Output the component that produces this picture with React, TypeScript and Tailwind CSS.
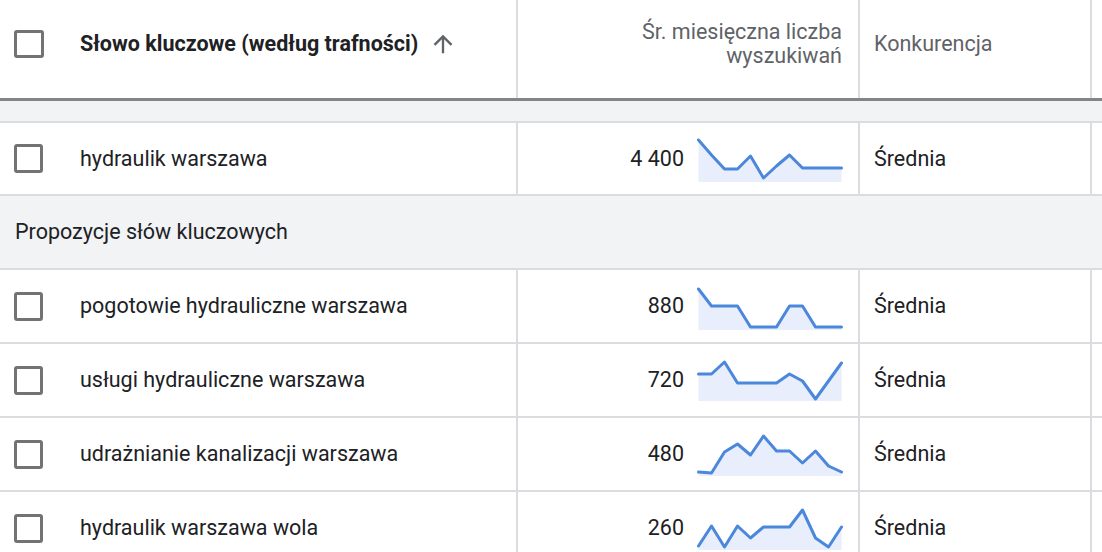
const KEYWORD_ROWS = [
  {
    keyword: "pogotowie hydrauliczne warszawa",
    volume: "880",
    competition: "Średnia",
    trend: [9, 26, 26, 26, 47, 47, 47, 26, 26, 47, 47, 47],
    base: 50,
  },
  {
    keyword: "usługi hydrauliczne warszawa",
    volume: "720",
    competition: "Średnia",
    trend: [20, 20, 8, 29, 29, 29, 29, 20, 27, 45, 27, 9],
    base: 47,
  },
  {
    keyword: "udrażnianie kanalizacji warszawa",
    volume: "480",
    competition: "Średnia",
    trend: [44, 45, 24, 16, 27, 8, 23, 23, 35, 23, 38, 44],
    base: 48,
  },
  {
    keyword: "hydraulik warszawa wola",
    volume: "260",
    competition: "Średnia",
    trend: [44, 24, 45, 24, 36, 25, 25, 25, 8, 36, 45, 25],
    base: 48,
  },
];

function Checkbox() {
  return <div className="w-[29px] h-[29px] shrink-0 rounded-[3px] border-[3px] border-[#737373] bg-white" />;
}

function Sparkline({ trend, base }: { trend: number[]; base: number }) {
  const pts = trend.map((y, i) => `${(1.5 + (i * 143) / 11).toFixed(1)},${y}`);
  const line = pts.join(" ");
  const area = `1.5,${base} ${line} 144.5,${base}`;
  return (
    <svg width="146" height="52" viewBox="0 0 146 52" className="shrink-0">
      <polygon points={area} fill="#e8eefb" />
      <polyline points={line} fill="none" stroke="#4b87db" strokeWidth="3" strokeLinejoin="round" strokeLinecap="round" />
    </svg>
  );
}

function KeywordRow({ keyword, volume, competition, trend, base, h = "h-[74px]" }: {
  keyword: string; volume: string; competition: string; trend: number[]; base: number; h?: string;
}) {
  return (
    <div className={`flex ${h} border-b-2 border-[#dadce0]`}>
      <div className="w-[518px] flex items-center pl-[14px] border-r-2 border-[#dadce0]">
        <Checkbox />
        <span className="ml-[37px] text-[#202124]">{keyword}</span>
      </div>
      <div className="w-[342px] flex items-center justify-end gap-[13px] pr-[15px] border-r-2 border-[#dadce0]">
        <span className="text-[#202124]">{volume}</span>
        <Sparkline trend={trend} base={base} />
      </div>
      <div className="w-[232px] flex items-center pl-[14px] border-r-2 border-[#dadce0] text-[#202124]">
        {competition}
      </div>
      <div className="flex-1" />
    </div>
  );
}

export default function App() {
  return (
    <div className="w-[1102px] h-[552px] overflow-hidden bg-white font-['Roboto',sans-serif] text-[21.5px] leading-[24px]">

      {/* Header */}
      <div className="flex h-[98px]">
        <div className="w-[518px] flex items-center pl-[14px] pb-[10px] border-r-2 border-[#dadce0]">
          <div className="w-[30px] h-[28px] shrink-0 rounded-[3px] border-[3px] border-[#737373]" />
          <span className="ml-[36px] font-bold text-[#202124]">Słowo kluczowe (według trafności)</span>
          <svg width="28" height="28" viewBox="0 0 24 24" className="ml-[11px]" fill="#5f6368">
            <path d="M4 12l1.41 1.41L11 7.83V20h2V7.83l5.58 5.59L20 12l-8-8-8 8z" />
          </svg>
        </div>
        <div className="w-[342px] flex flex-col items-end justify-center pr-[16px] pb-[10px] text-right text-[#5f6368] border-r-2 border-[#dadce0]">
          <span>Śr. miesięczna liczba</span>
          <span>wyszukiwań</span>
        </div>
        <div className="w-[232px] flex items-center pl-[14px] pb-[10px] text-[#5f6368] border-r-2 border-[#dadce0]">
          Konkurencja
        </div>
        <div className="flex-1" />
      </div>
      <div className="h-[3px] bg-[#858585]" />
      <div className="h-[22px] bg-[#f1f3f4] border-b-2 border-[#dadce0]" />

      <KeywordRow
        keyword="hydraulik warszawa"
        volume="4 400"
        competition="Średnia"
        trend={[7, 22, 36, 36, 23, 45, 33, 22, 35, 35, 35, 35]}
        base={49}
        h="h-[73px]"
      />

      {/* Group label */}
      <div className="h-[74px] flex items-center pl-[15px] bg-[#f1f3f4] border-b-2 border-[#dadce0] text-[#202124]">
        Propozycje słów kluczowych
      </div>

      {KEYWORD_ROWS.map((r) => (
        <KeywordRow key={r.keyword} {...r} />
      ))}
    </div>
  );
}
